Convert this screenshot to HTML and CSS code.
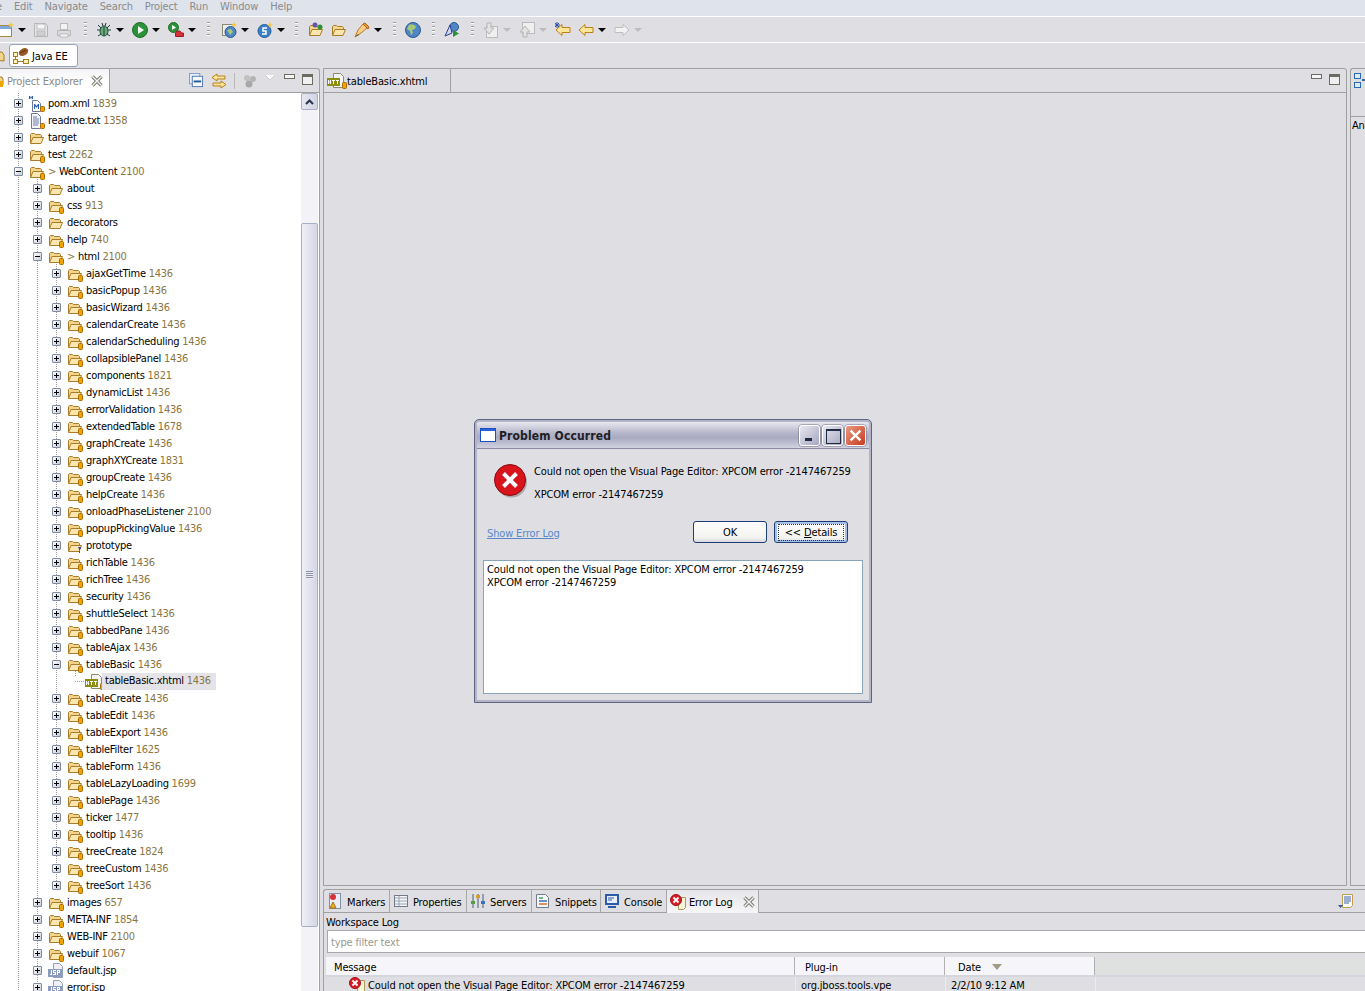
FILE: index.html
```html
<!DOCTYPE html>
<html lang="en">
<head>
<meta charset="utf-8">
<title>Java EE - Eclipse</title>
<link rel="stylesheet" href="styles.css">
</head>
<body>
<svg class="defs" width="0" height="0" aria-hidden="true">
  <defs>
    <symbol id="folder" viewBox="0 0 16 16"><path d="M1.500 13V4.500l1-1h3l1 1h5l1 1V7" fill="#f3d48c" stroke="#a87c28"/><path d="M1.500 13.500L4 7.500h10.500l-2.500 6z" fill="#fbe6b0" stroke="#a87c28"/></symbol>
    <symbol id="folderb" viewBox="0 0 16 16"><path d="M1.500 13V4.500l1-1h3l1 1h5l1 1V7" fill="#f3d48c" stroke="#a87c28"/><path d="M1.500 13.500L4 7.500h10.500l-2.500 6z" fill="#fbe6b0" stroke="#a87c28"/><rect x="11.500" y="9.500" width="4" height="6" rx="1" fill="#f0a400" stroke="#a96a00"/></symbol>
    <symbol id="folderq" viewBox="0 0 16 16"><path d="M1.500 13V4.500l1-1h3l1 1h5l1 1V7" fill="#f3d48c" stroke="#a87c28"/><path d="M1.500 13.500L4 7.500h10.500l-2.500 6z" fill="#fbe6b0" stroke="#a87c28"/><path d="M11 9h3v2h-1v1h-1v-1" fill="#3a4a9a"/><rect x="12" y="13" width="1" height="2" fill="#3a4a9a"/></symbol>
    <symbol id="pom" viewBox="0 0 16 16"><path d="M3.500 4.500h5l3 3v8h-8z" fill="#fff" stroke="#70789a"/><path d="M0 3V0h1l1 1.500L3 0h1v3H3V1.500L2 3 1 1.500V3z" fill="#2a60a8"/><path d="M5 13V8h1l1.500 2L9 8h1v5H9v-3l-1.500 2L6 10v3z" fill="#2a60a8"/><rect x="11.500" y="10.500" width="4" height="5" rx="1" fill="#f0a400" stroke="#a96a00"/></symbol>
    <symbol id="txt" viewBox="0 0 16 16"><path d="M2.500.5h6l3 3v12h-9z" fill="#f4f6fb" stroke="#707a98"/><path d="M4 4h4M4 6h6M4 8h6M4 10h6M4 12h5" stroke="#6a7aa8"/><rect x="11.500" y="10.500" width="4" height="5" rx="1" fill="#f0a400" stroke="#a96a00"/></symbol>
    <symbol id="html" viewBox="0 0 20 16"><path d="M6.500.5h7l3 3v11h-10z" fill="#f4f4f4" stroke="#8a8a70"/><rect x="0" y="5" width="13" height="8" fill="#8a8f10"/><path d="M1 7v4h1V9.500h1V11h1V7H3v1.500H2V7zM5 7h3v1H7v3H6V8H5zM9 7h3v1h-1v3h-1V8H9z" fill="#fff"/><rect x="15.500" y="9.500" width="4" height="6" rx="1" fill="#f0a400" stroke="#a96a00"/></symbol>
    <symbol id="jsp" viewBox="0 0 16 16"><path d="M5.500.5h6l3 3v11h-9z" fill="#f0f0f4" stroke="#90a0b8"/><rect x="0" y="6" width="14" height="8" fill="#8c9cc0"/><path d="M3 7h1v5H2v-1h1zM5 7h3v1H6v1h2v3H5v-1h2v-1H5zM9 7h3v3h-2v2H9zm1 1v1h1V8z" fill="#fff"/></symbol>
    <symbol id="x" viewBox="0 0 12 12"><path d="M1.500 1.500l9 9M10.500 1.500l-9 9" stroke="#7c7c72" stroke-width="3.400"/><path d="M1.500 1.500l9 9M10.500 1.500l-9 9" stroke="#f4f4f4" stroke-width="1.400"/></symbol>
    <symbol id="err" viewBox="0 0 16 16"><path d="M8.500 3.500h7v10l-2 2h-5z" fill="#f8f4d8" stroke="#a89858"/><circle cx="6" cy="6" r="5.500" fill="#d81e28" stroke="#a01018"/><path d="M3.500 3.500l5 5M8.500 3.500l-5 5" stroke="#fff" stroke-width="1.800"/></symbol>
    <symbol id="run" viewBox="0 0 16 16"><circle cx="8" cy="8" r="7.500" fill="#2c9238" stroke="#1f6d2c"/><path d="M6 4l6 4-6 4z" fill="#fff"/></symbol>
    <symbol id="arrowl" viewBox="0 0 16 16"><path d="M1 8l6-5.500V5.500h8v5H7v3z" fill="#fde59a" stroke="#b9801c"/></symbol>
    <symbol id="arrowr" viewBox="0 0 16 16"><path d="M15 8L9 2.500V5.500H1v5h8v3z" fill="#f2f2f2" stroke="#bdbdbd"/></symbol>
    <symbol id="globe" viewBox="0 0 16 16"><circle cx="8" cy="8" r="7.500" fill="#4f86c4" stroke="#2c5a90"/><path d="M4 3c3-1 5 0 7 1l-1 3-3 1 1 3-2 2-1-4-3-2z" fill="#a8c878"/></symbol>
  </defs>
</svg>

<div class="app">
  <nav class="menubar">
    <span class="mi m-file">e</span><span class="mi">Edit</span><span class="mi">Navigate</span><span class="mi">Search</span><span class="mi">Project</span><span class="mi">Run</span><span class="mi">Window</span><span class="mi">Help</span>
  </nav>

  <div class="toolbar">
    <span class="tool"><svg class="i16" viewBox="0 0 16 16"><rect x="1.500" y="3.500" width="12" height="11" fill="#fff" stroke="#a58a3c"/><rect x="2" y="4" width="11" height="3" fill="#7fa8dc"/><path d="M13 0l1 2 2 1-2 1-1 2-1-2-2-1 2-1z" fill="#f2c84a"/></svg></span><span class="arr"></span>
    <span class="tool t-mid t-first"><svg class="i16" viewBox="0 0 16 16"><path d="M1.500 1.500h11l2 2v11h-13z" fill="#e6e6e8" stroke="#b4b4b6"/><rect x="4" y="2" width="8" height="5" fill="#f6f6f6" stroke="#bcbcbc"/><rect x="4" y="9" width="8" height="5" fill="#cfcfd2" stroke="#bcbcbc"/></svg></span>
    <span class="tool t-mid"><svg class="i16" viewBox="0 0 16 16"><rect x="4.500" y="1.500" width="7" height="6" fill="#f2f2f2" stroke="#bbb"/><path d="M1.500 8.500h13v5h-13z" fill="#dcdcde" stroke="#b6b6b6"/><rect x="4" y="12" width="8" height="3" fill="#f6f6f6" stroke="#bbb"/></svg></span>
    <span class="grip g-a"></span>
    <span class="tool"><svg class="i16" viewBox="0 0 16 16"><path d="M2 3l3 3M14 3l-3 3M1 8h3M15 8h-3M2 14l3-2M14 14l-3-2M6 1l1 3M10 1L9 4" stroke="#1d3c40"/><ellipse cx="8" cy="9" rx="4" ry="5" fill="#6aa874" stroke="#1f4a40"/><path d="M8 5v9" stroke="#1f4a40"/></svg></span><span class="arr"></span>
    <span class="tool"><svg class="i16"><use href="#run"/></svg></span><span class="arr"></span>
    <span class="tool"><svg class="i16" viewBox="0 0 16 16"><circle cx="5.500" cy="5.500" r="5" fill="#2c9238" stroke="#1f6d2c"/><path d="M4 3l4 2.500L4 8z" fill="#fff"/><path d="M7.500 14.500V11l1.500-2h3l1.500 2h2v3.500z" fill="#d83038" stroke="#982028"/></svg></span><span class="arr"></span>
    <span class="grip g-b"></span>
    <span class="tool"><svg class="i16" viewBox="0 0 16 16"><rect x="1.500" y="2.500" width="11" height="11" fill="#eee" stroke="#8a8a70"/><circle cx="9.500" cy="10" r="5.500" fill="#4f86c4" stroke="#2c5a90"/><path d="M6 8l4-1 2 3-3 3z" fill="#a8c878"/><path d="M13 0l1 2 2 1-2 1-1 2-1-2-2-1 2-1z" fill="#f2c84a"/></svg></span><span class="arr"></span>
    <span class="tool"><svg class="i16" viewBox="0 0 16 16"><circle cx="7.500" cy="9" r="6.500" fill="#3a80c8" stroke="#245c98"/><path d="M10 6H6v3h3v3H5" fill="none" stroke="#fff" stroke-width="1.500"/><path d="M13 0l1 2 2 1-2 1-1 2-1-2-2-1 2-1z" fill="#f2c84a"/></svg></span><span class="arr"></span>
    <span class="grip g-e"></span>
    <span class="tool t-mid"><svg class="i16" viewBox="0 0 16 16"><use href="#folder"/><circle cx="7" cy="3" r="2.500" fill="#6a50a8"/><circle cx="12" cy="5" r="2.500" fill="#2c9238"/></svg></span>
    <span class="tool t-mid"><svg class="i16"><use href="#folder"/></svg></span>
    <span class="tool t-gap"><svg class="i16" viewBox="0 0 16 16"><path d="M1 15l3-7 5-6 4 4-6 5z" fill="#f8cf8a" stroke="#b87c20"/><path d="M9 2l2-1 4 4-1 2z" fill="#e89830" stroke="#a86410"/><path d="M1 15l3-3 1 1z" fill="#555"/></svg></span><span class="arr"></span>
    <span class="grip g-c"></span>
    <span class="tool"><svg class="i16"><use href="#globe"/></svg></span>
    <span class="grip g-d"></span>
    <span class="tool"><svg class="i16" viewBox="0 0 16 16"><circle cx="10" cy="5" r="4.500" fill="#4f86c4" stroke="#2c5a90"/><path d="M1 14L6 3l2 8z" fill="#d0d8f0" stroke="#2a3c90"/><path d="M9 8v7l6-3.500z" fill="#2c9238"/></svg></span>
    <span class="grip g-d"></span>
    <span class="tool"><svg class="i16" viewBox="0 0 16 16"><rect x="3.500" y="4.500" width="11" height="11" fill="#efefef" stroke="#bbb"/><path d="M4 1h4v5h3l-5 6-5-6h3z" fill="#e2e2e2" stroke="#b4b4b4"/></svg></span><span class="arr dim"></span>
    <span class="tool"><svg class="i16" viewBox="0 0 16 16"><rect x="3.500" y="0.500" width="12" height="11" fill="#efefef" stroke="#bbb"/><path d="M4 15h4v-5h3L6 4l-5 6h3z" fill="#e2e2e2" stroke="#b4b4b4"/></svg></span><span class="arr dim"></span>
    <span class="tool t-nar"><svg class="i16" viewBox="0 0 16 16"><use href="#arrowl"/><path d="M0 1l4 4M4 1L0 5M2 0v6M0 3h5" stroke="#2a50a8"/></svg></span>
    <span class="tool"><svg class="i16"><use href="#arrowl"/></svg></span><span class="arr"></span>
    <span class="tool"><svg class="i16"><use href="#arrowr"/></svg></span><span class="arr dim"></span>
  </div>

  <div class="perspbar">
    <svg class="persp-cut" viewBox="0 0 8 16"><path d="M-6 12V4h8l2 3v6z" fill="#f3d48c" stroke="#a87c28"/></svg>
    <div class="persp-btn">
      <svg class="i16" viewBox="0 0 16 16"><rect x="0.500" y="4.500" width="4" height="4" fill="#fff2b8" stroke="#a08020"/><rect x="0.500" y="11.500" width="4" height="4" fill="#fff2b8" stroke="#a08020"/><rect x="10.500" y="11.500" width="5" height="4" fill="#fff2b8" stroke="#a08020"/><path d="M2.500 8.500v3M4.500 13.500h6" stroke="#a08020"/><ellipse cx="10.500" cy="4" rx="5" ry="3.500" fill="#9a5a28" transform="rotate(-30 10.500 4)"/><path d="M7 5l6-3" stroke="#5a3010"/></svg>
      <span>Java EE</span>
    </div>
  </div>

  <main class="workspace">
    <section class="left view">
      <header class="viewhead">
        <div class="vtab vtab-pe">
          <svg class="pe-cut" viewBox="0 0 4 12"><path d="M-4 10V2h6l1 2v6z" fill="#f3d48c" stroke="#a87c28"/><rect x="-1" y="6" width="4" height="6" fill="#f0a400"/></svg>
          <span class="dimtext">Project Explorer</span>
          <svg class="x12"><use href="#x"/></svg>
        </div>
        <div class="viewtools">
          <svg class="i16 vt-a" viewBox="0 0 16 16"><rect x="0.500" y="0.500" width="11" height="11" fill="#e8eef8" stroke="#7f9cc4"/><rect x="3.500" y="3.500" width="11" height="11" fill="#f4f7fc" stroke="#4f78b0"/><rect x="5" y="8" width="8" height="2" fill="#1f5a98"/></svg>
          <svg class="i16 vt-b" viewBox="0 0 16 16"><path d="M6 1L1 4.500 6 8V6h8V3H6z" fill="#fde59a" stroke="#b9801c"/><path d="M10 8l5 3.500L10 15v-2H2v-3h8z" fill="#fde59a" stroke="#b9801c"/></svg>
          <span class="vsep"></span>
          <svg class="i16 vt-c" viewBox="0 0 16 16"><circle cx="5" cy="5" r="3" fill="#c0c0c0"/><circle cx="11" cy="6" r="3" fill="#b4b4b4"/><circle cx="7" cy="11" r="3.500" fill="#a8a8a8"/></svg>
          <span class="tri"></span>
          <span class="minbtn"></span>
          <span class="maxbtn"></span>
        </div>
      </header>
      <div class="treewrap">
        <div class="tree">
          <span class="vl vl-0"></span><span class="vl vl-1"></span><span class="vl vl-2"></span><span class="vl vl-3"></span>
          <div class="row l0"><span class="exp"></span><svg class="ic"><use href="#pom"/></svg><span class="name">pom.xml <em>1839</em></span></div>
          <div class="row l0"><span class="exp"></span><svg class="ic"><use href="#txt"/></svg><span class="name">readme.txt <em>1358</em></span></div>
          <div class="row l0"><span class="exp"></span><svg class="ic"><use href="#folder"/></svg><span class="name">target</span></div>
          <div class="row l0"><span class="exp"></span><svg class="ic"><use href="#folderb"/></svg><span class="name">test <em>2262</em></span></div>
          <div class="row l0"><span class="exp open"></span><svg class="ic"><use href="#folderb"/></svg><span class="name"><i>&gt;</i> WebContent <em>2100</em></span></div>
          <div class="row l1"><span class="exp"></span><svg class="ic"><use href="#folder"/></svg><span class="name">about</span></div>
          <div class="row l1"><span class="exp"></span><svg class="ic"><use href="#folderb"/></svg><span class="name">css <em>913</em></span></div>
          <div class="row l1"><span class="exp"></span><svg class="ic"><use href="#folder"/></svg><span class="name">decorators</span></div>
          <div class="row l1"><span class="exp"></span><svg class="ic"><use href="#folderb"/></svg><span class="name">help <em>740</em></span></div>
          <div class="row l1"><span class="exp open"></span><svg class="ic"><use href="#folderb"/></svg><span class="name"><i>&gt;</i> html <em>2100</em></span></div>
          <div class="row l2"><span class="exp"></span><svg class="ic"><use href="#folderb"/></svg><span class="name">ajaxGetTime <em>1436</em></span></div>
          <div class="row l2"><span class="exp"></span><svg class="ic"><use href="#folderb"/></svg><span class="name">basicPopup <em>1436</em></span></div>
          <div class="row l2"><span class="exp"></span><svg class="ic"><use href="#folderb"/></svg><span class="name">basicWizard <em>1436</em></span></div>
          <div class="row l2"><span class="exp"></span><svg class="ic"><use href="#folderb"/></svg><span class="name">calendarCreate <em>1436</em></span></div>
          <div class="row l2"><span class="exp"></span><svg class="ic"><use href="#folderb"/></svg><span class="name">calendarScheduling <em>1436</em></span></div>
          <div class="row l2"><span class="exp"></span><svg class="ic"><use href="#folderb"/></svg><span class="name">collapsiblePanel <em>1436</em></span></div>
          <div class="row l2"><span class="exp"></span><svg class="ic"><use href="#folderb"/></svg><span class="name">components <em>1821</em></span></div>
          <div class="row l2"><span class="exp"></span><svg class="ic"><use href="#folderb"/></svg><span class="name">dynamicList <em>1436</em></span></div>
          <div class="row l2"><span class="exp"></span><svg class="ic"><use href="#folderb"/></svg><span class="name">errorValidation <em>1436</em></span></div>
          <div class="row l2"><span class="exp"></span><svg class="ic"><use href="#folderb"/></svg><span class="name">extendedTable <em>1678</em></span></div>
          <div class="row l2"><span class="exp"></span><svg class="ic"><use href="#folderb"/></svg><span class="name">graphCreate <em>1436</em></span></div>
          <div class="row l2"><span class="exp"></span><svg class="ic"><use href="#folderb"/></svg><span class="name">graphXYCreate <em>1831</em></span></div>
          <div class="row l2"><span class="exp"></span><svg class="ic"><use href="#folderb"/></svg><span class="name">groupCreate <em>1436</em></span></div>
          <div class="row l2"><span class="exp"></span><svg class="ic"><use href="#folderb"/></svg><span class="name">helpCreate <em>1436</em></span></div>
          <div class="row l2"><span class="exp"></span><svg class="ic"><use href="#folderb"/></svg><span class="name">onloadPhaseListener <em>2100</em></span></div>
          <div class="row l2"><span class="exp"></span><svg class="ic"><use href="#folderb"/></svg><span class="name">popupPickingValue <em>1436</em></span></div>
          <div class="row l2"><span class="exp"></span><svg class="ic"><use href="#folderq"/></svg><span class="name">prototype</span></div>
          <div class="row l2"><span class="exp"></span><svg class="ic"><use href="#folderb"/></svg><span class="name">richTable <em>1436</em></span></div>
          <div class="row l2"><span class="exp"></span><svg class="ic"><use href="#folderb"/></svg><span class="name">richTree <em>1436</em></span></div>
          <div class="row l2"><span class="exp"></span><svg class="ic"><use href="#folderb"/></svg><span class="name">security <em>1436</em></span></div>
          <div class="row l2"><span class="exp"></span><svg class="ic"><use href="#folderb"/></svg><span class="name">shuttleSelect <em>1436</em></span></div>
          <div class="row l2"><span class="exp"></span><svg class="ic"><use href="#folderb"/></svg><span class="name">tabbedPane <em>1436</em></span></div>
          <div class="row l2"><span class="exp"></span><svg class="ic"><use href="#folderb"/></svg><span class="name">tableAjax <em>1436</em></span></div>
          <div class="row l2"><span class="exp open"></span><svg class="ic"><use href="#folderb"/></svg><span class="name">tableBasic <em>1436</em></span></div>
          <div class="row l3"><svg class="ic-w"><use href="#html"/></svg><span class="name sel">tableBasic.xhtml <em>1436</em></span></div>
          <div class="row l2"><span class="exp"></span><svg class="ic"><use href="#folderb"/></svg><span class="name">tableCreate <em>1436</em></span></div>
          <div class="row l2"><span class="exp"></span><svg class="ic"><use href="#folderb"/></svg><span class="name">tableEdit <em>1436</em></span></div>
          <div class="row l2"><span class="exp"></span><svg class="ic"><use href="#folderb"/></svg><span class="name">tableExport <em>1436</em></span></div>
          <div class="row l2"><span class="exp"></span><svg class="ic"><use href="#folderb"/></svg><span class="name">tableFilter <em>1625</em></span></div>
          <div class="row l2"><span class="exp"></span><svg class="ic"><use href="#folderb"/></svg><span class="name">tableForm <em>1436</em></span></div>
          <div class="row l2"><span class="exp"></span><svg class="ic"><use href="#folderb"/></svg><span class="name">tableLazyLoading <em>1699</em></span></div>
          <div class="row l2"><span class="exp"></span><svg class="ic"><use href="#folderb"/></svg><span class="name">tablePage <em>1436</em></span></div>
          <div class="row l2"><span class="exp"></span><svg class="ic"><use href="#folderb"/></svg><span class="name">ticker <em>1477</em></span></div>
          <div class="row l2"><span class="exp"></span><svg class="ic"><use href="#folderb"/></svg><span class="name">tooltip <em>1436</em></span></div>
          <div class="row l2"><span class="exp"></span><svg class="ic"><use href="#folderb"/></svg><span class="name">treeCreate <em>1824</em></span></div>
          <div class="row l2"><span class="exp"></span><svg class="ic"><use href="#folderb"/></svg><span class="name">treeCustom <em>1436</em></span></div>
          <div class="row l2"><span class="exp"></span><svg class="ic"><use href="#folderb"/></svg><span class="name">treeSort <em>1436</em></span></div>
          <div class="row l1"><span class="exp"></span><svg class="ic"><use href="#folderb"/></svg><span class="name">images <em>657</em></span></div>
          <div class="row l1"><span class="exp"></span><svg class="ic"><use href="#folderb"/></svg><span class="name">META-INF <em>1854</em></span></div>
          <div class="row l1"><span class="exp"></span><svg class="ic"><use href="#folderb"/></svg><span class="name">WEB-INF <em>2100</em></span></div>
          <div class="row l1"><span class="exp"></span><svg class="ic"><use href="#folderb"/></svg><span class="name">webuif <em>1067</em></span></div>
          <div class="row l1"><span class="exp"></span><svg class="ic"><use href="#jsp"/></svg><span class="name">default.jsp</span></div>
          <div class="row l1"><span class="exp"></span><svg class="ic"><use href="#jsp"/></svg><span class="name">error.jsp</span></div>
        </div>
        <div class="scrollbar">
          <div class="sb-btn"><svg class="sb-chev" viewBox="0 0 9 6"><path d="M1 5l3.500-3.500L8 5" fill="none" stroke="#2c3448" stroke-width="2"/></svg></div>
          <div class="sb-gap"></div>
          <div class="sb-thumb"><span class="sb-grip"></span></div>
        </div>
      </div>
    </section>

    <div class="rightcol">
      <div class="toprow">
        <section class="editor view">
          <header class="viewhead">
            <div class="vtab vtab-ed">
              <svg class="ic-w"><use href="#html"/></svg>
              <span>tableBasic.xhtml</span>
            </div>
            <div class="viewtools vt-ed">
              <span class="minbtn"></span>
              <span class="maxbtn"></span>
            </div>
          </header>
          <div class="editor-body"></div>
        </section>
        <section class="outline view">
          <header class="outline-head">
            <svg class="i16" viewBox="0 0 16 16"><rect x="0.500" y="0.500" width="6" height="5" fill="#dfe8f4" stroke="#2a6ab0"/><rect x="0.500" y="9.500" width="6" height="5" fill="#dfe8f4" stroke="#2a6ab0"/><path d="M8 6h4v2H8z" fill="#2a6ab0"/></svg>
          </header>
          <div class="outline-body">An</div>
        </section>
      </div>

      <section class="bottom view">
        <header class="btabs">
          <div class="btab"><svg class="i16" viewBox="0 0 16 16"><rect x="2.500" y="0.500" width="11" height="15" fill="#e8ecf4" stroke="#8090a8"/><circle cx="6" cy="4" r="3" fill="#d83038"/><path d="M6 9l3 6H3z" fill="#f0b020" stroke="#a87010"/></svg><span>Markers</span></div>
          <div class="btab"><svg class="i16" viewBox="0 0 16 16"><rect x="1.500" y="2.500" width="13" height="11" fill="#f4f6fa" stroke="#707c8c"/><path d="M2 5h12M2 8h12M2 11h12M6 3v10" stroke="#9aa4b4"/></svg><span>Properties</span></div>
          <div class="btab"><svg class="i16" viewBox="0 0 16 16"><path d="M3 1v14M8 1v14M13 1v14" stroke="#4a5c78"/><rect x="1" y="8" width="4" height="3" fill="#50a040"/><rect x="6" y="2" width="4" height="3" fill="#d8a020"/><rect x="11" y="8" width="4" height="3" fill="#3a70c0"/></svg><span>Servers</span></div>
          <div class="btab"><svg class="i16" viewBox="0 0 16 16"><path d="M1.500 1.500h9l3 3v10h-12z" fill="#f4f6fa" stroke="#707c8c"/><path d="M4 8h8" stroke="#3a70c0" stroke-width="1.500"/><path d="M4 11h8" stroke="#d07030" stroke-width="1.500"/><path d="M4 5h4" stroke="#40a060" stroke-width="1.500"/></svg><span>Snippets</span></div>
          <div class="btab"><svg class="i16" viewBox="0 0 16 16"><rect x="1" y="1" width="14" height="11" fill="#2a5ca8"/><rect x="3" y="3" width="10" height="7" fill="#eaf0fa"/><path d="M4 5h6M4 7h4" stroke="#2a5ca8"/><rect x="4" y="13" width="8" height="2" fill="#2a5ca8"/></svg><span>Console</span></div>
          <div class="btab on"><svg class="i16"><use href="#err"/></svg><span>Error Log</span><svg class="x12"><use href="#x"/></svg></div>
          <div class="btab-tools"><svg class="i16" viewBox="0 0 16 16"><path d="M4.500 1.500h10v11l-2 2h-8z" fill="#fff" stroke="#c09c50"/><path d="M6 4h7M6 6h7M6 8h7M6 10h5" stroke="#3a60a8"/><path d="M0 12h5l-2.500 3z" fill="#2a5ca8"/></svg></div>
        </header>
        <div class="wslog">Workspace Log</div>
        <input class="filter" type="text" placeholder="type filter text">
        <div class="thead">
          <div class="th th-msg">Message</div>
          <div class="th th-plug">Plug-in</div>
          <div class="th th-date">Date<span class="sort"></span></div>
          <div class="th-fill"></div>
        </div>
        <div class="tbody">
          <div class="td td-msg"><svg class="i16"><use href="#err"/></svg>Could not open the Visual Page Editor: XPCOM error -2147467259</div>
          <div class="td td-plug">org.jboss.tools.vpe</div>
          <div class="td td-date">2/2/10 9:12 AM</div>
        </div>
      </section>
    </div>
  </main>
</div>

<div class="dialog">
  <div class="dlg-title">
    <svg class="dlg-ic" viewBox="0 0 16 14"><rect x="0.500" y="0.500" width="15" height="13" fill="#fff" stroke="#1c4fc4"/><rect x="1" y="1" width="14" height="2" fill="#2a62dc"/></svg>
    <span class="dlg-name">Problem Occurred</span>
    <span class="wbtn w-min"></span>
    <span class="wbtn w-max"></span>
    <span class="wbtn w-close"><svg viewBox="0 0 12 12" class="wx"><path d="M1.500 1.500l9 9M10.500 1.500l-9 9" stroke="#fff" stroke-width="2.200"/></svg></span>
  </div>
  <div class="dlg-body">
    <div class="dlg-msg">
      <svg class="dlg-err" viewBox="0 0 34 34"><circle cx="17.500" cy="18" r="15.500" fill="#444" opacity=".35"/><circle cx="16" cy="16" r="15.500" fill="#d8141c" stroke="#8c0a10"/><path d="M9.500 9.500l13 13M22.500 9.500l-13 13" stroke="#fff" stroke-width="4"/></svg>
      <div class="dlg-lines">
        <p>Could not open the Visual Page Editor: XPCOM error -2147467259</p>
        <p>XPCOM error -2147467259</p>
      </div>
    </div>
    <div class="dlg-actions">
      <a class="dlg-link" href="#log">Show Error Log</a>
      <span class="dlg-btn">OK</span>
      <span class="dlg-btn focus"><span class="focusin">&lt;&lt; <u>D</u>etails</span></span>
    </div>
    <div class="dlg-detail">Could not open the Visual Page Editor: XPCOM error -2147467259<br>XPCOM error -2147467259</div>
  </div>
</div>
</body>
</html>
```

FILE: styles.css
```css
* { box-sizing: border-box; }
html, body { margin: 0; padding: 0; height: 100%; overflow: hidden; background: #dfdfe3; }
body { font: 11px/13px "DejaVu Sans Condensed", "DejaVu Sans", sans-serif; font-stretch: condensed; letter-spacing: -.15px; color: #000; position: relative; }
svg { display: block; flex: none; overflow: hidden; }
.defs { position: absolute; }
.i16 { width: 16px; height: 16px; }
.x12 { width: 12px; height: 12px; }

.app { height: 100vh; display: flex; flex-direction: column; overflow: hidden; }

/* menu */
.menubar { height: 17px; flex: none; display: flex; background: #dfe3ec; border-bottom: 1px solid #fff; color: #8b8b8b; overflow: hidden; }
.mi { margin-right: 12px; }
.m-file { margin-left: -4px; margin-right: 12px; }

/* toolbar */
.toolbar { height: 26px; flex: none; display: flex; align-items: center; background: #dfdfe3; border-bottom: 1px solid #fff; margin-left: -4px; }
.tool { width: 20px; display: flex; justify-content: center; flex: none; }
.t-mid { width: 23px; }
.t-first { margin-left: -3px; }
.t-gap { margin-left: 2px; }
.t-nar { width: 20px; margin-right: 3px; }
.arr { width: 13px; height: 16px; margin-right: 3px; flex: none; position: relative; }
.arr::after { content: ""; position: absolute; left: 2px; top: 6px; border: 4px solid transparent; border-top-color: #000; border-bottom: 0; }
.arr.dim::after { border-top-color: #bdbdbd; }
.grip { width: 3px; height: 16px; flex: none; background: repeating-linear-gradient(#9a9a9a 0 1px, #fff 1px 2px, transparent 2px 4px); }
.g-a { margin: 0 7px 0 9px; }
.g-b { margin: 0 9px 0 5px; }
.g-e { margin: 0 6px 0 4px; }
.g-c { margin: 0 7px 0 5px; }
.g-d { margin: 0 7px 0 9px; }

/* perspective */
.perspbar { height: 25px; flex: none; display: flex; align-items: center; gap: 1px; }
.persp-cut { width: 8px; height: 16px; }
.persp-btn { width: 69px; height: 23px; background: #fff; border: 1px solid #94a4ba; border-radius: 3px; display: flex; align-items: center; gap: 3px; padding-left: 3px; }
.persp-btn span { padding-top: 1px; }

/* workspace */
.workspace { flex: 1; min-height: 0; display: flex; gap: 3px; }
.view { border: 1px solid #a0a0a0; border-radius: 0 3px 0 0; background: #dfdfe3; }
.viewhead { height: 24px; flex: none; display: flex; border-bottom: 1px solid #a0a0a0; }
.vtab { height: 23px; display: flex; align-items: center; white-space: nowrap; }
.left { width: 320px; flex: none; border-left: 0; border-bottom: 0; display: flex; flex-direction: column; }
.vtab-pe { width: 110px; background: linear-gradient(#f4f4f6, #fff 60%); border-right: 1px solid #a0a0a0; margin-bottom: -1px; height: 24px; gap: 3px; padding-right: 6px; }
.pe-cut { width: 4px; height: 12px; }
.dimtext { color: #8b8b8b; flex: 1; }
.viewtools { flex: 1; display: flex; align-items: center; position: relative; }
.vt-a { margin-left: 79px; width: 15px; height: 15px; }
.vt-b { margin-left: 7px; }
.vsep { width: 1px; height: 16px; background: #b8b8b8; margin-left: 7px; }
.vt-c { margin-left: 7px; }
.tri { width: 0; height: 0; margin-left: 7px; margin-top: -6px; border: 5px solid transparent; border-top: 5px solid #fff; border-bottom: 0; filter: drop-shadow(0 0 .6px #555); }
.minbtn { width: 11px; height: 5px; border: 1px solid #6c6c62; background: #f6f6f6; margin-left: 9px; margin-top: -8px; flex: none; }
.maxbtn { width: 11px; height: 11px; border: 1px solid #6c6c62; border-top-width: 3px; background: #f0f0f0; margin-left: 7px; margin-top: -2px; flex: none; }

.treewrap { flex: 1; min-height: 0; display: flex; background: #fff; }
.tree { width: 301px; flex: none; position: relative; overflow: hidden; padding-top: 2px; letter-spacing: -.25px; }
.row { height: 17px; display: flex; align-items: center; position: relative; white-space: nowrap; }
.l0 { padding-left: 14px; }
.l1 { padding-left: 33px; }
.l2 { padding-left: 52px; }
.l3 { padding-left: 85px; }
.exp { width: 9px; height: 9px; border: 1px solid #7f8a9c; border-radius: 1px; background: linear-gradient(135deg, #fff, #c8ccd8); position: relative; margin-right: 6px; flex: none; z-index: 1; }
.exp::before { content: ""; position: absolute; left: 1px; top: 3px; width: 5px; height: 1px; background: #000; }
.exp::after { content: ""; position: absolute; left: 3px; top: 1px; width: 1px; height: 5px; background: #000; }
.exp.open::after { display: none; }
.ic { width: 16px; height: 16px; margin-right: 3px; flex: none; }
.ic-w { width: 20px; height: 16px; margin-right: -3px; flex: none; }
.name em { font-style: normal; color: #8a7642; }
.name i { font-style: normal; color: #8a7642; }
.sel { background: #e3e3e8; padding: 1px 3px 2px 3px; line-height: 14px; width: 114px; }
.vl { position: absolute; width: 1px; background: repeating-linear-gradient(#9a9a9a 0 1px, transparent 1px 2px); }
.vl-0 { left: 18px; top: 0; bottom: 0; }
.vl-1 { left: 37px; top: 80px; bottom: 0; }
.vl-2 { left: 56px; top: 165px; height: 625px; }
.vl-3 { left: 75px; top: 572px; height: 12px; }
.l3::before { content: ""; position: absolute; left: 75px; top: 8px; width: 10px; height: 1px; background: repeating-linear-gradient(90deg, #9a9a9a 0 1px, transparent 1px 2px); }

.scrollbar { width: 17px; flex: none; display: flex; flex-direction: column; background: #f3f3f7; }
.sb-btn { height: 17px; flex: none; background: linear-gradient(90deg, #e6e8f0, #d0d4e4); border: 1px solid #a8aec4; border-radius: 2px; display: flex; align-items: center; justify-content: center; }
.sb-chev { width: 9px; height: 6px; }
.sb-gap { height: 113px; flex: none; }
.sb-thumb { height: 704px; flex: none; background: linear-gradient(90deg, #f0f0f6, #d4d6e6); border: 1px solid #a8aec4; border-radius: 2px; display: flex; align-items: center; justify-content: center; }
.sb-grip { width: 7px; height: 8px; background: repeating-linear-gradient(#8e90a8 0 1px, #eee 1px 2px); }

.rightcol { flex: 1; min-width: 0; display: flex; flex-direction: column; gap: 3px; }
.toprow { height: 818px; flex: none; display: flex; gap: 3px; }
.editor { width: 1024px; flex: none; display: flex; flex-direction: column; }
.vtab-ed { width: 127px; gap: 3px; border-right: 1px solid #a0a0a0; padding-left: 3px; margin-bottom: -1px; height: 23px; }
.vtab-ed span { padding-top: 1px; }
.vt-ed { justify-content: flex-end; padding-right: 6px; }
.editor-body { flex: 1; }
.outline { flex: 1; border-right: 0; border-radius: 3px 0 0 0; display: flex; flex-direction: column; }
.outline-head { height: 48px; flex: none; padding: 4px 0 0 3px; border-bottom: 1px solid #a0a0a0; }
.outline-body { padding: 2px 0 0 1px; }

/* bottom panel */
.bottom { flex: 1; min-height: 0; border-right: 0; border-bottom: 0; border-radius: 3px 0 0 0; overflow: hidden; }
.btabs { height: 23px; display: flex; border-bottom: 1px solid #a0a0a0; position: relative; }
.btab { height: 22px; display: flex; align-items: center; gap: 4px; padding-left: 3px; border-right: 1px solid #a8a8a8; flex: none; white-space: nowrap; }
.btab span { padding-top: 2px; }
.btab:nth-child(1) { width: 66px; }
.btab:nth-child(2) { width: 77px; }
.btab:nth-child(3) { width: 65px; }
.btab:nth-child(4) { width: 69px; }
.btab:nth-child(5) { width: 66px; }
.btab.on { width: 92px; background: linear-gradient(#e6e6ea, #f6f6f8); height: 23px; margin-bottom: -1px; gap: 3px; }
.btab.on .x12 { margin-left: 7px; }
.btab-tools { margin-left: auto; width: 27px; display: flex; align-items: center; }
.wslog { height: 17px; padding: 3px 0 0 2px; }
.filter { display: block; width: 1060px; height: 23px; margin: 0 0 0 3px; border: 1px solid #a8a8a8; border-right: 0; background: #fff; padding: 2px 3px 0; font: 11px "DejaVu Sans Condensed", "DejaVu Sans", sans-serif; font-stretch: condensed; letter-spacing: -.15px; outline: 0; }
.filter::placeholder { color: #9a9a8e; opacity: 1; }
.thead { height: 20px; margin-top: 4px; display: flex; background: #f6f6fa; border-bottom: 2px solid #d6d6de; margin-left: 2px; }
.th { height: 18px; padding: 4px 0 0 8px; border-right: 1px solid #b0b0b0; flex: none; }
.th-msg { width: 469px; }
.th-plug { width: 150px; padding-left: 10px; }
.th-date { width: 150px; padding-left: 13px; display: flex; gap: 11px; }
.sort { width: 0; height: 0; border: 5px solid transparent; border-top: 6px solid #a09a84; border-bottom: 0; margin-top: 3px; }
.th-fill { flex: 1; background: #dfe1e1; }
.tbody { display: flex; margin-left: 2px; }
.td { height: 17px; padding: 2px 0 0 5px; border-right: 1px solid #ececf0; flex: none; white-space: nowrap; }
.td-msg { width: 470px; display: flex; gap: 3px; padding-left: 23px; padding-top: 0; line-height: 17px; }
.td-plug { width: 150px; }
.td-date { width: 150px; }

/* dialog */
.dialog { position: absolute; left: 474px; top: 419px; width: 398px; height: 284px; background: #dfdfe3; border: 1px solid #5f6480; border-radius: 5px 5px 0 0; box-shadow: inset 0 0 0 2px #b4b4c8; padding: 2px; display: flex; flex-direction: column; }
.dlg-title { height: 26px; flex: none; display: flex; align-items: center; background: linear-gradient(#e8e8f0, #b8b8cc 40%, #a9a9c0 60%, #d2d2e0); padding-left: 3px; border-radius: 3px 3px 0 0; }
.dlg-ic { width: 16px; height: 14px; }
.dlg-name { font: bold 12px "DejaVu Sans Condensed", "DejaVu Sans", sans-serif; font-stretch: condensed; letter-spacing: .15px; color: #1e1e24; margin-left: 3px; flex: 1; padding-top: 2px; }
.wbtn { width: 21px; height: 21px; margin-right: 2px; border: 1px solid #fff; border-radius: 3px; background: linear-gradient(135deg, #e8e8f0, #a6a6c0); box-shadow: 0 0 0 .5px #70708c; position: relative; flex: none; }
.w-min::after { content: ""; position: absolute; left: 5px; bottom: 4px; width: 7px; height: 3px; background: #1f2a44; }
.w-max::after { content: ""; position: absolute; left: 3px; top: 3px; width: 13px; height: 12px; border: 1px solid #1f2a44; border-top-width: 2px; }
.w-close { background: linear-gradient(135deg, #e89a80, #c83a20); margin-right: 3px; display: flex; align-items: center; justify-content: center; }
.wx { width: 13px; height: 13px; }
.dlg-body { flex: 1; padding: 0 6px 5px; border-top: 1px solid #8a8aa0; display: flex; flex-direction: column; }
.dlg-msg { display: flex; padding: 15px 0 0 11px; height: 72px; flex: none; }
.dlg-err { width: 34px; height: 34px; }
.dlg-lines { margin-left: 6px; padding-top: 1px; white-space: nowrap; }
.dlg-lines p { margin: 0 0 10px; }
.dlg-actions { display: flex; align-items: center; height: 22px; flex: none; }
.dlg-link { color: #5a88cc; text-decoration: underline; margin-left: 4px; padding-top: 2px; width: 206px; flex: none; }
.dlg-btn { width: 74px; height: 22px; margin-right: 7px; padding-top: 1px; border: 1px solid #1c3f78; border-radius: 3px; background: linear-gradient(#fff, #f2f2ee 80%, #d8d8e0); display: flex; align-items: center; justify-content: center; flex: none; }
.dlg-btn.focus { box-shadow: inset 0 0 0 2px #a8c0e8; }
.focusin { outline: 1px dotted #333; outline-offset: 1px; padding: 0 5px; white-space: nowrap; }
.dlg-detail { margin-top: 17px; height: 134px; border: 1px solid #8aa4bc; background: #fff; padding: 2px 3px; flex: none; }
```
